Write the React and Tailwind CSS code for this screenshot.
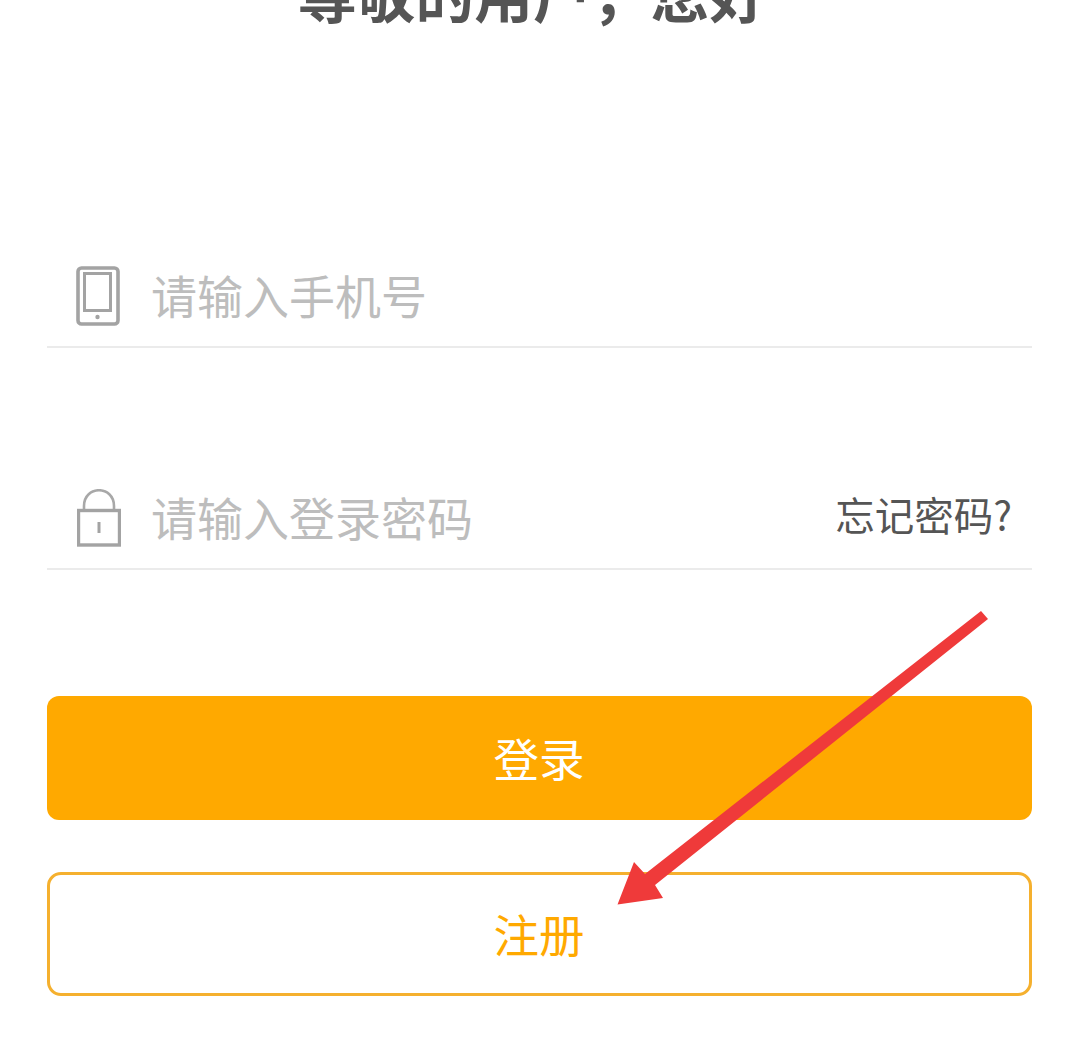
import React from 'react';

const PhoneIcon = () => (
  <svg className="shrink-0 ml-[-1px] mt-[4px]" width="44" height="60" viewBox="0 0 44 60" fill="none">
    <rect x="2" y="2" width="40" height="56" rx="3.5" stroke="#a3a3a3" strokeWidth="3.6" />
    <rect x="8.5" y="7.5" width="26" height="37" stroke="#a3a3a3" strokeWidth="3" />
    <circle cx="21.5" cy="51" r="2.2" fill="#a3a3a3" />
  </svg>
);

const LockIcon = () => (
  <svg className="shrink-0 mt-[4px]" width="44" height="58" viewBox="0 0 44 58" fill="none">
    <path d="M7 21V17C7 -4 37 -4 37 17V21" stroke="#a8a8a8" strokeWidth="2.6" />
    <rect x="1.5" y="21.5" width="41" height="34.5" stroke="#a3a3a3" strokeWidth="3.4" />
    <rect x="20.5" y="33" width="3" height="11" fill="#a3a3a3" />
  </svg>
);

const Arrow = () => (
  <svg className="absolute left-0 top-0 pointer-events-none" width="1080" height="1048" viewBox="0 0 1080 1048">
    <polygon points="981,611 988,619 655,885 663,898 617.5,904.5 634,862 645,874" fill="#ef3a3a" />
  </svg>
);

const Field = ({ icon, placeholder, right }) => (
  <div className="flex items-center h-[124px] border-b-2 border-[#ebebeb] pl-[30px] pr-[20px] pt-[18px]">
    <div className="w-[44px] flex justify-start">{icon}</div>
    <span className="ml-[30px] text-[46px] leading-[60px] text-[#bdbdbd]">{placeholder}</span>
    {right && <span className="ml-auto mb-[4px] text-[39.5px] leading-[50px] text-[#555555]">{right}</span>}
  </div>
);

export default function App() {
  return (
    <div
      className="relative w-[1080px] h-[1048px] overflow-hidden bg-white pl-[47px] pr-[48px]"
      style={{ fontFamily: '"Noto Sans CJK SC", "Noto Sans", sans-serif' }}
    >
      <h1 className="mt-[-42px] h-[68px] text-center text-[58.8px] leading-[70px] font-bold text-[#555555] pr-[13px]">
        尊敬的用户，您好
      </h1>
      <div className="mt-[198px]">
        <Field icon={<PhoneIcon />} placeholder="请输入手机号" />
      </div>
      <div className="mt-[98px]">
        <Field icon={<LockIcon />} placeholder="请输入登录密码" right="忘记密码?" />
      </div>
      <button className="mt-[126px] w-full h-[124px] rounded-[12px] bg-[#ffa900] text-white text-[45.5px] leading-none pr-[1px]">
        登录
      </button>
      <button className="mt-[52px] w-full h-[124px] rounded-[14px] border-[3px] border-[#f5b02e] bg-white text-[#ffa900] text-[45.5px] leading-none pr-[1px]">
        注册
      </button>
      <Arrow />
    </div>
  );
}
